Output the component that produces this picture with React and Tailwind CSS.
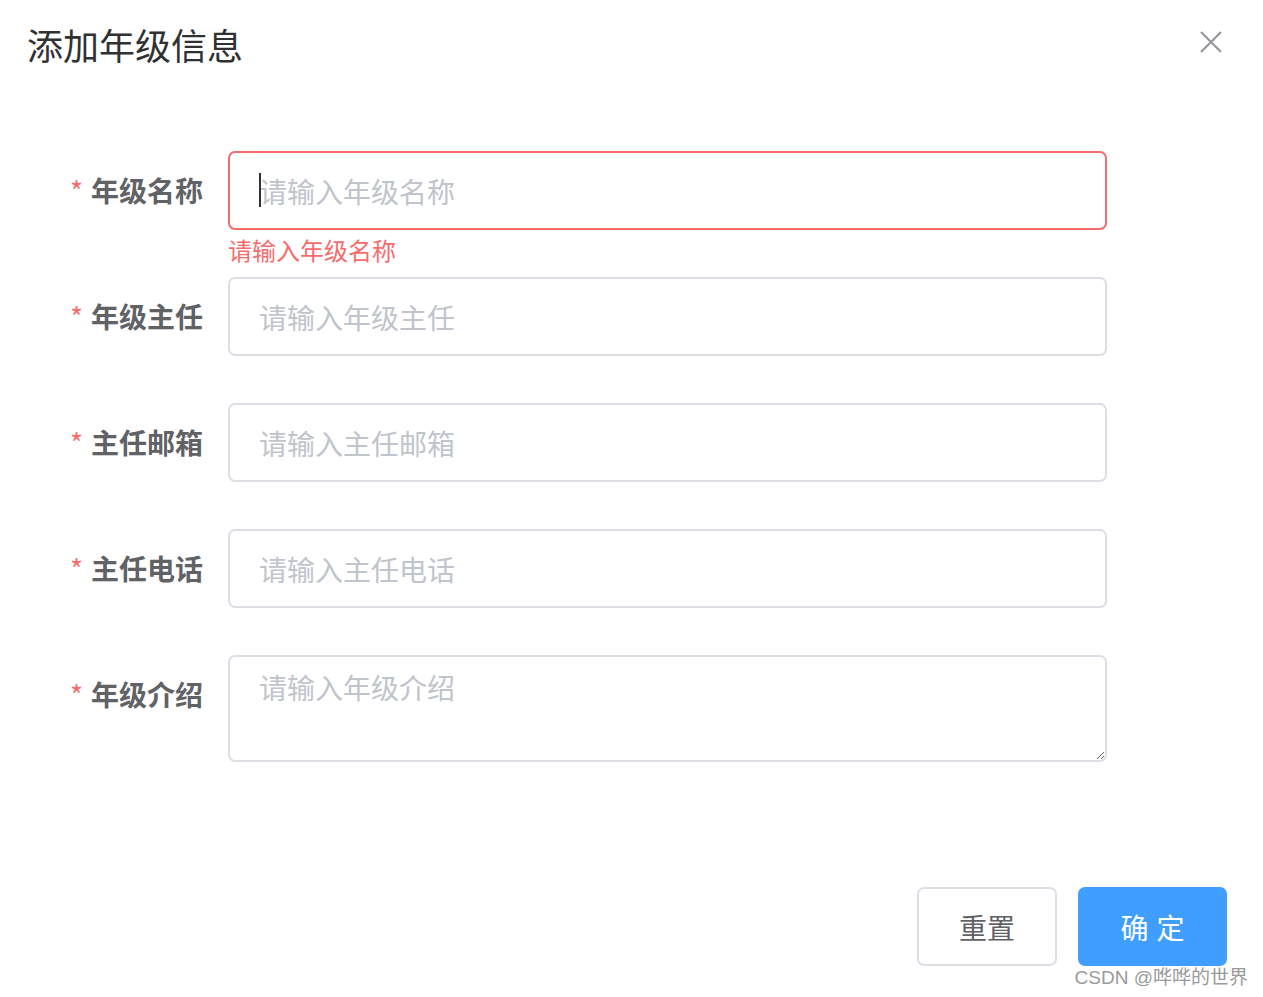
import React from "react";

function Row({ label, children, className = "" }) {
  return (
    <div className={"flex " + className}>
      <div className="w-[228px] shrink-0 pr-[25px] text-right text-[28px] leading-[79px] font-bold text-[#606266]">
        <span className="text-[#f56c6c] font-normal mr-[8px]">*</span>
        {label}
      </div>
      <div className="relative w-[879px]">{children}</div>
    </div>
  );
}

function Input({ placeholder, error }) {
  return (
    <input
      readOnly
      placeholder={placeholder}
      className={
        "block w-full h-[79px] rounded-[7px] border-2 bg-white px-[29px] text-[28px] text-[#606266] outline-none placeholder:text-[#c0c4cc] " +
        (error ? "border-[#f56c6c]" : "border-[#dcdfe6]")
      }
    />
  );
}

export default function App() {
  return (
    <div className="relative w-[1263px] h-[997px] bg-white overflow-hidden font-['Noto_Sans_CJK_SC','Noto_Sans',sans-serif]">
      <div className="flex items-start justify-between pl-[27px] pr-[40px] pt-[20px]">
        <h1 className="text-[36px] leading-[48px] text-[#303133] font-normal">添加年级信息</h1>
        <button className="mt-[10px] w-[24px] h-[24px] flex items-center justify-center text-[#909399]">
          <svg width="22" height="22" viewBox="0 0 22 22" fill="none" stroke="currentColor" strokeWidth="2">
            <path d="M1 1 L21 21 M21 1 L1 21" />
          </svg>
        </button>
      </div>

      <div className="mt-[83px] flex flex-col">
        <Row label="年级名称" className="h-[126px]">
          <Input placeholder="请输入年级名称" error />
          <span className="absolute left-[31px] top-[22px] w-[2px] h-[34px] bg-[#303133]" />
          <div className="pt-[8px] text-[24px] leading-[24px] text-[#f56c6c]">请输入年级名称</div>
        </Row>
        <Row label="年级主任" className="h-[126px]">
          <Input placeholder="请输入年级主任" />
        </Row>
        <Row label="主任邮箱" className="h-[126px]">
          <Input placeholder="请输入主任邮箱" />
        </Row>
        <Row label="主任电话" className="h-[126px]">
          <Input placeholder="请输入主任电话" />
        </Row>
        <Row label="年级介绍">
          <textarea
            readOnly
            placeholder="请输入年级介绍"
            className="block w-full h-[107px] rounded-[7px] border-2 border-[#dcdfe6] bg-white px-[29px] py-[9px] text-[28px] leading-[42px] text-[#606266] outline-none placeholder:text-[#c0c4cc]"
          />
        </Row>
      </div>

      <div className="mt-[125px] flex justify-end gap-[21px] pr-[36px]">
        <button className="w-[140px] h-[79px] rounded-[7px] border-2 border-[#dcdfe6] bg-white text-[28px] text-[#606266]">
          重置
        </button>
        <button className="w-[149px] h-[79px] rounded-[7px] bg-[#409eff] text-[28px] text-white tracking-[8px] pl-[8px]">
          确定
        </button>
      </div>

      <div className="absolute right-[15px] top-[964px] text-[19px] leading-[28px] text-[#9a9a9a] font-['Liberation_Sans','Noto_Sans_CJK_SC',sans-serif]">
        CSDN @哗哗的世界
      </div>
    </div>
  );
}
